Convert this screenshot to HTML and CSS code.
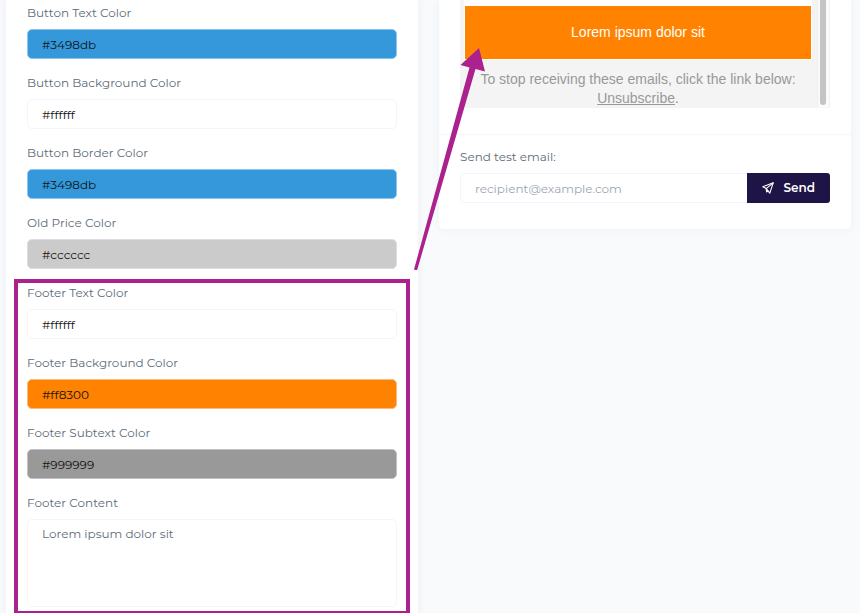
FILE: index.html
```html
<!DOCTYPE html>
<html lang="en">
<head>
    <meta charset="UTF-8">
    <meta name="viewport" content="width=device-width, initial-scale=1.0">
    <title>Email Template Settings</title>
    <link rel="stylesheet" href="styles.css">
</head>
<body>
    <div class="page">
        <form class="card settings">
            <div class="field">
                <label for="button-text">Button Text Color</label>
                <input class="bg-blue" id="button-text" type="text" value="#3498db">
            </div>
            <div class="field">
                <label for="button-background">Button Background Color</label>
                <input id="button-background" type="text" value="#ffffff">
            </div>
            <div class="field">
                <label for="button-border">Button Border Color</label>
                <input class="bg-blue" id="button-border" type="text" value="#3498db">
            </div>
            <div class="field">
                <label for="old-price">Old Price Color</label>
                <input class="bg-light-gray" id="old-price" type="text" value="#cccccc">
            </div>
            <div class="footer-fields">
                <div class="field">
                    <label for="footer-text">Footer Text Color</label>
                    <input id="footer-text" type="text" value="#ffffff">
                </div>
                <div class="field">
                    <label for="footer-background">Footer Background Color</label>
                    <input class="bg-orange" id="footer-background" type="text" value="#ff8300">
                </div>
                <div class="field">
                    <label for="footer-subtext">Footer Subtext Color</label>
                    <input class="bg-gray" id="footer-subtext" type="text" value="#999999">
                </div>
                <div class="field">
                    <label for="footer-content">Footer Content</label>
                    <textarea id="footer-content">Lorem ipsum dolor sit</textarea>
                </div>
                <div class="highlight"></div>
            </div>
        </form>

        <div class="card preview">
            <div class="preview-body">
                <div class="email">
                    <div class="email-content">
                        <div class="email-footer">Lorem ipsum dolor sit</div>
                    </div>
                    <p class="email-subtext">To stop receiving these emails, click the link below: <a href="#">Unsubscribe</a>.</p>
                </div>
                <div class="scroll-track">
                    <div class="scroll-thumb"></div>
                </div>
            </div>
            <form class="send-test">
                <label for="recipient">Send test email:</label>
                <div class="send-row">
                    <input id="recipient" type="email" placeholder="recipient@example.com">
                    <button type="button">
                        <svg width="12" height="12" viewBox="0 0 12 12" fill="none" stroke="currentColor" stroke-width="1.1" stroke-linejoin="round" stroke-linecap="round">
                            <path d="M11.2 .8 L.8 4.8 L4.2 6.6 L7.8 11.2 Z"/>
                            <path d="M11.2 .8 L4.2 6.6 L4.6 10 L6 8.900"/>
                        </svg>
                        Send
                    </button>
                </div>
            </form>
        </div>

        <!-- arrow from the footer settings to the footer in the preview -->
        <svg class="arrow" width="80" height="230" viewBox="0 0 80 230">
            <path d="M4 229.500 L7 230.500 L65.500 29 L75 31.500 L69 8 L50.500 25 L59.500 27.500 Z"/>
        </svg>
    </div>
</body>
</html>
```

FILE: styles.css
```css
* {
    box-sizing: border-box;
}
body {
    margin: 0;
    background-color: #f8fafc;
    font-family: Montserrat, "Open Sans", sans-serif;
    font-size: 12px;
    line-height: 16px;
    color: #64717f;
}
.page {
    position: relative;
    display: grid;
    grid-template-columns: 1fr 1fr;
    gap: 21px;
    height: 100vh;
    padding: 0 9px 0 6px;
    overflow: hidden;
}
.card {
    background-color: #fff;
    box-shadow: 0 0 10px rgba(30, 50, 70, 0.05);
}
.settings {
    padding: 5px 21px;
}
.field {
    display: flex;
    flex-direction: column;
    gap: 8px;
    margin-bottom: 16px;
}
label {
    color: #5d6b79;
}
input, textarea {
    width: 100%;
    height: 30px;
    padding: 0 14px;
    border: 1px solid #f3f4fd;
    border-radius: 5px;
    background-color: #fff;
    font: inherit;
    color: #111;
    outline: none;
}
textarea {
    display: block;
    height: 88px;
    padding: 6px 14px;
    color: #5d6b79;
    resize: none;
}
.bg-blue {
    background-color: #3498db;
    border-color: #8cc5ee;
}
.bg-light-gray {
    background-color: #cbcbcb;
    border-color: #dcdce4;
}
.bg-orange {
    background-color: #ff8300;
    border-color: #fbb877;
}
.bg-gray {
    background-color: #999;
    border-color: #c0c0c8;
}
.footer-fields {
    position: relative;
}
.highlight {
    position: absolute;
    inset: -6px -13px -8px;
    border: 4px solid #ab218e;
    pointer-events: none;
}
.preview {
    align-self: start;
    border-radius: 0 0 5px 5px;
}
.preview-body {
    display: flex;
    padding: 0 21px 26px;
    border-bottom: 1px solid #f5f6f8;
}
.email {
    flex: 1;
    padding: 0 5px 0 4px;
    background-color: #f4f4f4;
    font-family: Helvetica, "Liberation Sans", Arial, sans-serif;
    font-size: 14px;
    line-height: 19px;
    text-align: center;
}
.email-content {
    padding: 6px 1px 1px;
    background-color: #fff;
}
.email-footer {
    padding: 17px;
    background-color: #ff8300;
    color: #fff;
}
.email-subtext {
    margin: 0;
    padding: 10px 10px 0;
    color: #999;
}
.email-subtext a {
    color: inherit;
}
.scroll-track {
    width: 13px;
    padding: 0 3px 3px 2px;
    border: 1px solid #f0f0f0;
    border-width: 0 1px;
    background-color: #fafafa;
}
.scroll-thumb {
    height: 100%;
    border-radius: 0 0 4px 4px;
    background-color: #c4c4c4;
}
.send-test {
    display: flex;
    flex-direction: column;
    gap: 8px;
    padding: 14px 21px 26px;
}
.send-row {
    display: flex;
}
.send-row input {
    flex: 1;
    border-right: 0;
    border-radius: 5px 0 0 5px;
}
.send-row input::placeholder {
    color: #9ba6b2;
}
.send-row button {
    display: flex;
    align-items: center;
    gap: 10px;
    height: 30px;
    padding: 0 15px;
    border: 0;
    border-radius: 0 3px 3px 0;
    background-color: #1e1446;
    font: inherit;
    font-weight: 600;
    color: #fff;
    cursor: pointer;
}
.arrow {
    position: absolute;
    left: 410px;
    top: 40px;
    fill: #ab218e;
    pointer-events: none;
}
```
